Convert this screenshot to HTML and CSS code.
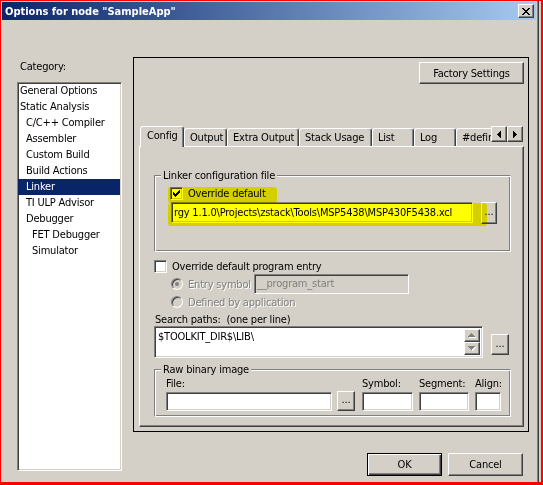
FILE: index.html
```html
<!DOCTYPE html>
<html>
<head>
<meta charset="utf-8">
<title>Options for node "SampleApp"</title>
<link rel="stylesheet" href="styles.css">
</head>
<body>
<div class="frame">
  <div class="win">
    <div class="titlebar">
      <span class="title">Options for node "SampleApp"</span>
      <span class="tb-close">
        <svg width="8" height="7" viewBox="0 0 8 7" shape-rendering="crispEdges"><path d="M0 0h2v1h-2z M6 0h2v1h-2z M1 1h2v1h-2z M5 1h2v1h-2z M2 2h4v1h-4z M3 3h2v1h-2z M2 4h4v1h-4z M1 5h2v1h-2z M5 5h2v1h-2z M0 6h2v1h-2z M6 6h2v1h-2z"/></svg>
      </span>
    </div>
    <div class="client">
      <div class="left">
        <div class="cat-label">Category:</div>
        <div class="listbox">
          <div class="item l0">General Options</div>
          <div class="item l0">Static Analysis</div>
          <div class="item l1">C/C++ Compiler</div>
          <div class="item l1">Assembler</div>
          <div class="item l1">Custom Build</div>
          <div class="item l1">Build Actions</div>
          <div class="item l1 selected">Linker</div>
          <div class="item l1">TI ULP Advisor</div>
          <div class="item l1">Debugger</div>
          <div class="item l2">FET Debugger</div>
          <div class="item l2">Simulator</div>
        </div>
      </div>
      <div class="right">
        <div class="panel">
          <div class="panel-top">
            <div class="btn factory">Factory Settings</div>
          </div>
          <div class="tabstrip">
            <div class="tabs">
              <div class="tab sel w-config">Config</div>
              <div class="tab w-output">Output</div>
              <div class="tab w-extra">Extra Output</div>
              <div class="tab w-stack">Stack Usage</div>
              <div class="tab w-list">List</div>
              <div class="tab w-log">Log</div>
              <div class="tab w-define">#define</div>
            </div>
            <div class="tab-arrows">
              <div class="btn arrow-btn">
                <svg width="4" height="7" viewBox="0 0 4 7" shape-rendering="crispEdges"><path d="M3 0h1v7h-1z M2 1h1v5h-1z M1 2h1v3h-1z M0 3h1v1h-1z"/></svg>
              </div>
              <div class="btn arrow-btn">
                <svg width="4" height="7" viewBox="0 0 4 7" shape-rendering="crispEdges"><path d="M0 0h1v7h-1z M1 1h1v5h-1z M2 2h1v3h-1z M3 3h1v1h-1z"/></svg>
              </div>
            </div>
          </div>
          <div class="page">
            <div class="group g1">
              <div class="legend">Linker configuration file</div>
              <div class="row chk-row">
                <div class="chk">
                  <svg width="7" height="7" viewBox="0 0 7 7" shape-rendering="crispEdges"><path d="M0 2h1v3h-1z M1 3h1v3h-1z M2 4h1v3h-1z M3 3h1v3h-1z M4 2h1v3h-1z M5 1h1v3h-1z M6 0h1v3h-1z"/></svg>
                </div>
                <span class="chk-label">Override default</span>
              </div>
              <div class="row file-row">
                <div class="edit linker-file">rgy 1.1.0\Projects\zstack\Tools\MSP5438\MSP430F5438.xcl</div>
                <div class="btn dots linker-dots">...</div>
              </div>
            </div>

            <div class="row chk-row entry-chk">
              <div class="chk"></div>
              <span class="chk-label">Override default program entry</span>
            </div>
            <div class="row radio-row r1">
              <div class="radio on"><span class="dot"></span></div>
              <span class="radio-label dis entry-label">Entry symbol</span>
              <div class="edit disabled-edit entry-edit"><span class="dis-plain">__program_start</span></div>
            </div>
            <div class="row radio-row r2">
              <div class="radio"></div>
              <span class="radio-label dis">Defined by application</span>
            </div>
            <div class="search-label">Search paths:&nbsp; (one per line)</div>
            <div class="row search-row">
              <div class="edit search-edit">
                <div class="search-text">$TOOLKIT_DIR$\LIB\</div>
                <div class="vscroll">
                  <div class="btn sbtn">
                    <svg width="8" height="5" viewBox="0 0 8 5" shape-rendering="crispEdges"><path fill="#fff" d="M4 1h1v1h-1z M3 2h3v1h-3z M2 3h5v1h-5z M1 4h7v1h-7z"/><path fill="#808080" d="M3 0h1v1h-1z M2 1h3v1h-3z M1 2h5v1h-5z M0 3h7v1h-7z"/></svg>
                  </div>
                  <div class="btn sbtn">
                    <svg width="8" height="5" viewBox="0 0 8 5" shape-rendering="crispEdges"><path fill="#fff" d="M1 1h7v1h-7z M2 2h5v1h-5z M3 3h3v1h-3z M4 4h1v1h-1z"/><path fill="#808080" d="M0 0h7v1h-7z M1 1h5v1h-5z M2 2h3v1h-3z M3 3h1v1h-1z"/></svg>
                  </div>
                </div>
              </div>
              <div class="btn dots search-dots">...</div>
            </div>

            <div class="group g2">
              <div class="legend">Raw binary image</div>
              <div class="raw-grid">
                <div class="col c-file">
                  <div class="flabel">File:</div>
                  <div class="edit field"></div>
                </div>
                <div class="col c-btn">
                  <div class="flabel">&nbsp;</div>
                  <div class="btn dots raw-dots">...</div>
                </div>
                <div class="col c-sym">
                  <div class="flabel">Symbol:</div>
                  <div class="edit field"></div>
                </div>
                <div class="col c-seg">
                  <div class="flabel">Segment:</div>
                  <div class="edit field"></div>
                </div>
                <div class="col c-align">
                  <div class="flabel">Align:</div>
                  <div class="edit field"></div>
                </div>
              </div>
            </div>

            <div class="hl hl1"></div>
            <div class="hl hl2"></div>
          </div>
        </div>
        <div class="dlg-buttons">
          <div class="btn btn-default dlg-btn">OK</div>
          <div class="btn dlg-btn">Cancel</div>
        </div>
      </div>
    </div>
  </div>
</div>
</body>
</html>
```

FILE: styles.css
```css
* { box-sizing: border-box; }

html, body {
  margin: 0;
  padding: 0;
}

body {
  width: 543px;
  height: 485px;
  overflow: hidden;
  font-family: "DejaVu Sans Condensed", "Liberation Sans", sans-serif;
  font-size: 11px;
  line-height: 13px;
  letter-spacing: -0.2px;
  color: #000;
  background: #d4d0c8;
}

.frame {
  width: 543px;
  height: 485px;
  border-style: solid;
  border-color: #ff0000;
  border-width: 1px 2px 3px 1px;
  background: #d4d0c8;
  padding-right: 2px;
}

.win {
  height: 100%;
  border-right: 1px solid #404040;
  box-shadow: inset -1px 0 #808080;
  padding: 1px 2px 0 1px;
}

/* ---------- title bar ---------- */
.titlebar {
  height: 18px;
  display: flex;
  align-items: center;
  justify-content: space-between;
  padding: 0 2px 0 3px;
  background: linear-gradient(to right, #0a246a, #a6caf0);
}

.title {
  color: #fff;
  font-family: "DejaVu Sans Condensed", "Liberation Sans", sans-serif;
  font-weight: bold;
  font-size: 11px;
  letter-spacing: 0;
  white-space: nowrap;
}

.tb-close {
  width: 16px;
  height: 14px;
  display: flex;
  align-items: center;
  justify-content: center;
  background: #d4d0c8;
  border: 1px solid;
  border-color: #fff #404040 #404040 #fff;
  box-shadow: inset -1px -1px #808080;
}

/* ---------- client layout ---------- */
.client {
  display: grid;
  grid-template-columns: 105px 396px;
  column-gap: 11px;
  padding: 37px 0 0 15px;
}

.cat-label {
  margin-top: 3px;
  padding-left: 3px;
  height: 13px;
}

.listbox {
  margin-top: 9px;
  height: 389px;
  background: #fff;
  border: 1px solid;
  border-color: #808080 #fff #fff #808080;
  box-shadow: inset 1px 1px #404040, inset -1px -1px #d4d0c8;
  padding: 0 1px 0 0;
}

.item {
  height: 16px;
  line-height: 16px;
  white-space: nowrap;
}
.item.l0 { padding-left: 2px; }
.item.l1 { padding-left: 8px; }
.item.l2 { padding-left: 14px; }
.item.selected {
  background: #0a246a;
  color: #fff;
}

/* ---------- panel ---------- */
.panel {
  height: 375px;
  border: 1px solid #000;
  padding: 4px 4px 4px 5px;
}

.panel-top {
  display: flex;
  justify-content: flex-end;
}

.btn {
  display: flex;
  align-items: center;
  justify-content: center;
  background: #d4d0c8;
  border: 1px solid;
  border-color: #fff #404040 #404040 #fff;
  box-shadow: inset -1px -1px #808080;
  white-space: nowrap;
}

.factory {
  width: 105px;
  height: 22px;
}

/* tabs */
.tabstrip {
  margin-top: 42px;
  height: 21px;
  margin-bottom: -1px;
  display: flex;
  padding-left: 1px;
  position: relative;
  z-index: 1;
}

.tabs {
  flex: 1;
  display: flex;
  align-items: flex-start;
  overflow: hidden;
  height: 21px;
}

.tab {
  flex: none;
  height: 18px;
  margin-top: 2px;
  border: 1px solid;
  border-bottom: none;
  border-color: #fff #404040 transparent #fff;
  border-radius: 3px 3px 0 0;
  box-shadow: inset -1px 0 #808080;
  padding: 2px 0 0 5px;
  white-space: nowrap;
  overflow: hidden;
  background: #d4d0c8;
}

.tab.sel {
  height: 21px;
  margin-top: 0;
  padding-left: 6px;
}

.w-config { width: 44px; }
.w-output { width: 43px; }
.w-extra { width: 72px; }
.w-stack { width: 73px; }
.w-list { width: 42px; }
.w-log { width: 42px; }
.w-define { width: 60px; }

.tab-arrows {
  flex: none;
  display: flex;
  margin-right: 1px;
}

.arrow-btn {
  width: 16px;
  height: 16px;
}

.page {
  position: relative;
  height: 281px;
  border: 1px solid;
  border-color: #fff #404040 #404040 #fff;
  box-shadow: inset -1px -1px #808080;
  padding: 28px 0 0 14px;
}

/* group boxes */
.group {
  position: relative;
  width: 357px;
  border: 1px solid;
  border-color: #808080 #fff #fff #808080;
  box-shadow: inset 1px 1px #fff, inset -1px -1px #808080;
}

.g1 {
  height: 77px;
  padding: 11px 0 0 15px;
}

.g2 {
  margin-top: 11px;
  height: 48px;
  padding: 7px 0 0 11px;
}

.legend {
  position: absolute;
  left: 6px;
  top: -7px;
  padding: 0 2px;
  background: #d4d0c8;
  white-space: nowrap;
}

.row {
  display: flex;
}

.chk-row {
  align-items: center;
  height: 13px;
}

.chk {
  width: 13px;
  height: 13px;
  flex: none;
  display: flex;
  align-items: center;
  justify-content: center;
  background: #fff;
  border: 1px solid;
  border-color: #808080 #fff #fff #808080;
  box-shadow: inset 1px 1px #404040, inset -1px -1px #d4d0c8;
}

.chk-label {
  margin-left: 5px;
  white-space: nowrap;
}

.edit {
  background: #fff;
  border: 1px solid;
  border-color: #808080 #fff #fff #808080;
  box-shadow: inset 1px 1px #404040, inset -1px -1px #d4d0c8;
  white-space: nowrap;
  overflow: hidden;
}

.file-row {
  margin-top: 2px;
  padding-left: 1px;
  align-items: flex-start;
}

.linker-file {
  width: 302px;
  height: 21px;
  line-height: 19px;
  padding-left: 2px;
}

.dots {
  padding-bottom: 3px;
}

.linker-dots {
  margin-left: 8px;
  width: 16px;
  height: 22px;
}

.entry-chk {
  margin-top: 8px;
}

.radio-row {
  align-items: center;
  padding-left: 17px;
}

.r1 {
  margin-top: 1px;
  height: 20px;
}

.r2 {
  margin-top: 2px;
  height: 12px;
}

.radio {
  flex: none;
  width: 12px;
  height: 12px;
  border-radius: 50%;
  border: 1px solid;
  border-color: #808080 #fff #fff #808080;
  box-shadow: inset 1px 1px #404040;
  background: #d4d0c8;
  display: flex;
  align-items: center;
  justify-content: center;
}

.dot {
  width: 4px;
  height: 4px;
  border-radius: 50%;
  background: #808080;
}

.radio-label {
  margin-left: 5px;
  white-space: nowrap;
}

.entry-label {
  width: 66px;
}

.dis {
  color: #808080;
  text-shadow: 1px 1px 0 #fff;
}

.dis-plain {
  color: #808080;
}

.disabled-edit {
  background: #d4d0c8;
}

.entry-edit {
  width: 155px;
  height: 20px;
  line-height: 18px;
  padding-left: 2px;
}

.search-label {
  margin-top: 5px;
  height: 13px;
  padding-left: 1px;
}

.search-row {
  align-items: flex-start;
}

.search-edit {
  width: 329px;
  height: 32px;
  display: flex;
  padding: 2px;
}

.search-text {
  flex: 1;
  padding: 1px 0 0 1px;
}

.vscroll {
  width: 16px;
  display: flex;
  flex-direction: column;
}

.sbtn {
  width: 16px;
  height: 14px;
}

.search-dots {
  margin-left: 8px;
  margin-top: 8px;
  width: 18px;
  height: 21px;
}

/* raw binary image */
.raw-grid {
  display: flex;
}

.col {
  display: flex;
  flex-direction: column;
}

.flabel {
  height: 13px;
  margin-bottom: 2px;
  white-space: nowrap;
}

.field {
  height: 19px;
}

.c-file { width: 166px; }
.c-btn { width: 18px; margin-left: 5px; }
.c-sym { width: 51px; margin-left: 7px; }
.c-seg { width: 50px; margin-left: 6px; }
.c-align { width: 26px; margin-left: 6px; }

.raw-dots {
  margin-top: -1px;
  height: 20px;
}

/* yellow highlighter strokes over the page */
.hl {
  position: absolute;
  background: #ffff00;
  mix-blend-mode: multiply;
  pointer-events: none;
}

.hl1 {
  left: 28px;
  top: 40px;
  width: 109px;
  height: 16px;
  border-radius: 3px;
}

.hl2 {
  left: 28px;
  top: 56px;
  width: 319px;
  height: 23px;
  border-radius: 3px;
}

/* dialog buttons */
.dlg-buttons {
  margin-top: 21px;
  display: flex;
  justify-content: flex-end;
  gap: 6px;
  padding-right: 6px;
}

.dlg-btn {
  width: 75px;
  height: 23px;
}

.btn-default {
  border: 1px solid #000;
  box-shadow: inset 1px 1px #fff, inset -1px -1px #404040, inset -2px -2px #808080;
}
```
